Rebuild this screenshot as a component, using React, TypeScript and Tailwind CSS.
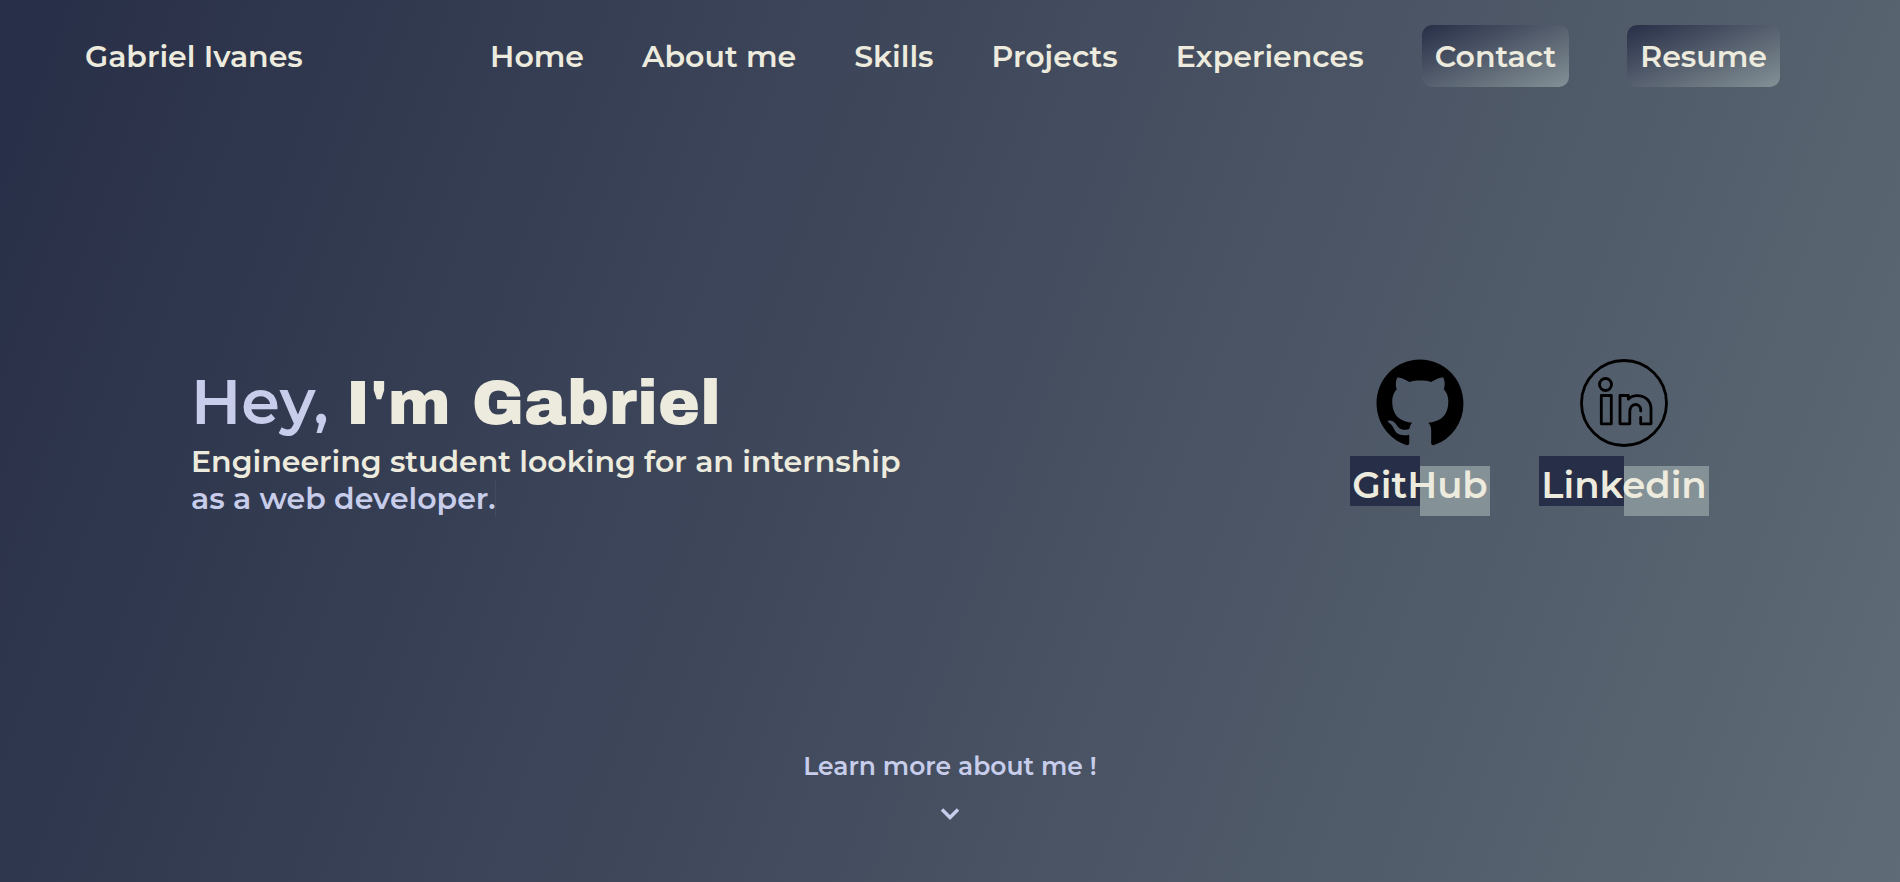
const links = ["Home", "About me", "Skills", "Projects", "Experiences"];

const buttons = ["Contact", "Resume"];

const labelBackdrop =
  "block h-[60px] w-full text-center whitespace-nowrap bg-[linear-gradient(#272e47,#272e47),linear-gradient(#849196,#849196)] bg-no-repeat [background-size:50%_50px] [background-position:left_top,right_bottom] text-[37px] leading-[58px]";

function GitHubMark() {
  return (
    <svg viewBox="0 0 16 16" className="h-[88px] w-[88px] text-black" fill="currentColor" aria-hidden="true">
      <path d="M8 .1C3.600 .1 .1 3.640 .1 8.060c0 3.540 2.260 6.530 5.400 7.590.4.07.55-.17.55-.38 0-.19-.01-.82-.01-1.49-2.01.37-2.53-.49-2.69-.94-.09-.23-.48-.94-.82-1.13-.28-.15-.68-.52-.01-.53.63-.01 1.08.58 1.23.82.72 1.21 1.87.87 2.33.66.07-.52.28-.87.51-1.07-1.78-.2-3.64-.89-3.64-3.95 0-.87.31-1.59.82-2.15-.08-.2-.36-1.02.08-2.12 0 0 .67-.21 2.2.82.64-.18 1.32-.27 2-.27s1.36.09 2 .27c1.53-1.04 2.2-.82 2.2-.82.44 1.1.16 1.92.08 2.12.51.56.82 1.27.82 2.15 0 3.07-1.87 3.75-3.65 3.95.29.25.54.73.54 1.48 0 1.07-.01 1.93-.01 2.2 0 .21.15.46.55.38A7.950 7.950 0 0 0 15.900 8.060C15.900 3.640 12.370 .1 8 .1z" />
    </svg>
  );
}

function LinkedinMark() {
  return (
    <svg
      viewBox="0 0 88 88"
      className="h-[88px] w-[88px] text-black"
      fill="none"
      stroke="currentColor"
      strokeWidth="2.8"
      strokeLinecap="round"
      strokeLinejoin="round"
      aria-hidden="true"
    >
      <circle cx="44" cy="44" r="42.5" />
      <circle cx="25.5" cy="25.5" r="6" />
      <path d="M21.3 36.5h10v28.3h-10z" />
      <path d="M60.700 52V50.500C60.500 47.300 58 45.500 55.500 45.500C52 45.500 49.800 48.500 49.800 53V64.800H40V36.500H48.300V40.200C50.500 38 53.500 36.700 57 36.700C65 36.700 71 41.500 71 50V64.800H60.700V58.500" />
    </svg>
  );
}

export default function App() {
  return (
    <div className="flex min-h-screen flex-col bg-[linear-gradient(110deg,#272e47,#5f6b76)] font-['Montserrat','Inter',sans-serif] font-semibold text-[#edebde]">
      <header className="flex items-start justify-between pt-[25px] pr-[120px] pl-[85px] text-[30px] leading-[60px] whitespace-nowrap">
        <a href="#home" className="pt-[2px]">
          Gabriel Ivanes
        </a>
        <nav aria-label="Main">
          <ul className="flex gap-[58px]">
            {links.map((label) => (
              <li key={label}>
                <a href="#section" className="block pt-[2px]">
                  {label}
                </a>
              </li>
            ))}
            {buttons.map((label) => (
              <li key={label}>
                <button
                  type="button"
                  className="block rounded-[10px] bg-[linear-gradient(to_bottom_right,#272e47,#849196)] px-[13px] pt-[2px]"
                >
                  {label}
                </button>
              </li>
            ))}
          </ul>
        </nav>
      </header>

      <main className="flex flex-1 flex-col justify-between pt-[272px] pb-[56px]">
        <section className="flex items-start justify-between px-[191px]">
          <div className="pt-[3px] whitespace-nowrap">
            <h1 className="text-[62px] leading-[80px]">
              <span className="text-[#c7cdea]">Hey, </span>
              <span className="font-['Archivo_Black','Inter',sans-serif] text-[63px] font-normal">I'm Gabriel</span>
            </h1>
            <p className="text-[30px] leading-[37px]">Engineering student looking for an internship</p>
            <p className="w-fit border-r border-[#434a60] text-[30px] leading-[37px] text-[#c7cdea]">
              as a web developer.
            </p>
          </div>
          <div className="flex gap-[49px]">
            <a href="#github" className="flex w-[140px] flex-col items-center gap-[9px]">
              <GitHubMark />
              <span className={labelBackdrop}>GitHub</span>
            </a>
            <a href="#linkedin" className="flex w-[170px] flex-col items-center gap-[9px]">
              <LinkedinMark />
              <span className={labelBackdrop}>Linkedin</span>
            </a>
          </div>
        </section>

        <a href="#about" className="flex flex-col items-center gap-4 self-center text-[#c7cdea]">
          <span className="text-[25px] leading-[40px]">Learn more about me !</span>
          <svg viewBox="0 0 24 24" className="h-[24px] w-[24px]" fill="none" stroke="currentColor" strokeWidth="3.4" aria-hidden="true">
            <path d="M4 7.500L12 15.500L20 7.500" />
          </svg>
        </a>
      </main>
    </div>
  );
}
